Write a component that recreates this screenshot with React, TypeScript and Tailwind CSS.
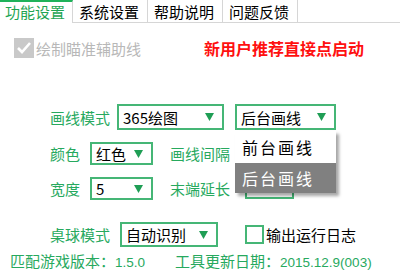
import React from 'react'

const font = { fontFamily: '"Microsoft YaHei", "Noto Sans CJK SC", "Noto Sans", sans-serif' }

const Arrow = () => (
  <svg width="9" height="8" viewBox="0 0 9 8" className="shrink-0">
    <path d="M0 0 H9 L4.5 8 Z" fill="#1f9e55" />
  </svg>
)

const Select = ({ value, className }: { value: string; className: string }) => (
  <div
    className={`flex items-center justify-between border-2 border-[#45b676] bg-white pl-[4px] pr-[8px] text-[15px] leading-none text-black ${className}`}
  >
    <span>{value}</span>
    <Arrow />
  </div>
)

const Label = ({ text, className = '' }: { text: string; className?: string }) => (
  <span className={`text-[15px] leading-none text-[#27a95e] ${className}`}>{text}</span>
)

const Num = ({ children }: { children: React.ReactNode }) => (
  <span className="font-['Liberation_Sans',Arial,sans-serif] text-[13.5px]">{children}</span>
)

export default function App() {
  const tabs = ['功能设置', '系统设置', '帮助说明', '问题反馈']

  return (
    <div style={font} className="relative w-[400px] h-[270px] bg-white">
      {/* Tabs */}
      <div className="flex h-[23px]">
        {tabs.map((t, i) => (
          <div
            key={t}
            className={
              i === 0
                ? 'w-[73px] h-[23px] border-t-2 border-t-[#1fb25a] border-r border-r-[#d6d6d6] bg-white pl-[5px] text-[15px] leading-[20px] text-[#1fa552]'
                : 'w-[75px] h-[23px] border-b border-b-[#d6d6d6] border-r border-r-[#d6d6d6] bg-white pl-[6px] pt-[2px] text-[15px] leading-[20px] text-black'
            }
          >
            {t}
          </div>
        ))}
        <div className="flex-1 h-[23px] border-b border-b-[#d6d6d6]" />
      </div>

      {/* Checkbox + notice */}
      <div className="mt-[15px] flex h-[20px] items-center">
        <div className="ml-[14px] flex h-[20px] w-[20px] items-center justify-center bg-[#c9c9c9]">
          <svg width="16" height="14" viewBox="0 0 16 14">
            <path d="M2 7 L6 11 L14 2" stroke="#ffffff" strokeWidth="2.6" fill="none" />
          </svg>
        </div>
        <span className="ml-[2px] text-[15px] leading-none text-[#b8b8b8]">绘制瞄准辅助线</span>
        <span className="ml-[63px] text-[16px] font-bold leading-none text-[#ff1010]">新用户推荐直接点启动</span>
      </div>

      {/* Row 1 */}
      <div className="mt-[46px] flex h-[26px] items-center">
        <Label text="画线模式" className="ml-[50px]" />
        <Select value="365绘图" className="ml-[7px] h-[26px] w-[107px]" />
        <Select value="后台画线" className="ml-[11px] h-[26px] w-[101px]" />
      </div>

      {/* Row 2 */}
      <div className="mt-[12px] flex h-[23px] items-center">
        <Label text="颜色" className="ml-[50px]" />
        <Select value="红色" className="ml-[10px] h-[23px] w-[63px]" />
        <Label text="画线间隔" className="ml-[17px]" />
      </div>

      {/* Row 3 */}
      <div className="mt-[12px] flex h-[23px] items-center">
        <Label text="宽度" className="ml-[50px]" />
        <Select value="5" className="ml-[10px] h-[23px] w-[63px]" />
        <Label text="末端延长" className="ml-[17px]" />
        <div className="ml-[15px] h-[21px] w-[49px] border-2 border-[#45b676] bg-white" />
      </div>

      {/* Row 4 */}
      <div className="mt-[22px] flex h-[25px] items-center">
        <Label text="桌球模式" className="ml-[50px]" />
        <Select value="自动识别" className="ml-[10px] h-[25px] w-[98px]" />
        <div className="ml-[27px] h-[19px] w-[19px] border-2 border-[#45b676] bg-white" />
        <span className="ml-[2px] text-[15px] leading-none text-black">输出运行日志</span>
      </div>

      {/* Footer */}
      <div className="mt-[5px] flex h-[18px] items-center text-[15px] leading-none text-[#27a95e]">
        <span className="ml-[10px]">
          匹配游戏版本：<Num>1.5.0</Num>
        </span>
        <span className="ml-[30px]">
          工具更新日期：<Num>2015.12.9(003)</Num>
        </span>
      </div>

      {/* Open dropdown list */}
      <div className="absolute left-[235px] top-[131px] w-[101px] bg-white shadow-[3px_3px_3px_rgba(0,0,0,0.35)]">
        <div className="flex h-[32px] items-center pl-[7px] text-[16px] tracking-[2px] text-black">前台画线</div>
        <div className="flex h-[30px] items-center bg-[#808080] pl-[7px] text-[16px] tracking-[2px] text-white">后台画线</div>
      </div>
    </div>
  )
}
